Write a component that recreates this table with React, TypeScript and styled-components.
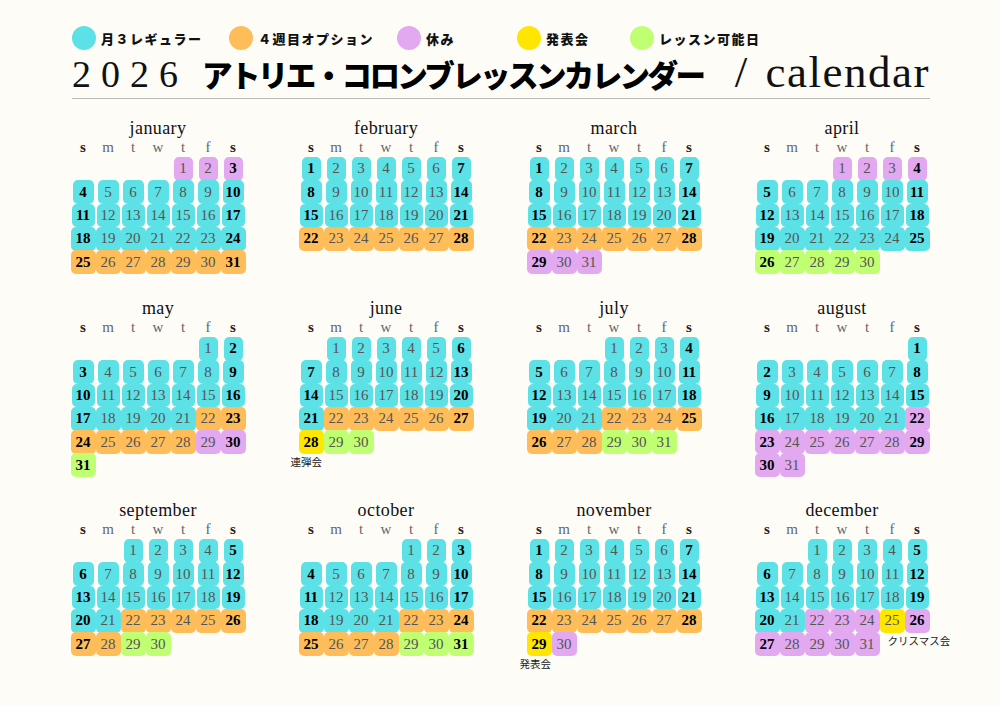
import React from 'react';
import styled, { createGlobalStyle } from 'styled-components';

const GlobalStyle = createGlobalStyle`
  body {
    margin: 0;
    background: #fdfcf7;
    font-family: "Liberation Serif", serif;
  }
`;

const COLORS: Record<string, string> = {
  C: '#5ce1e6',
  O: '#ffbd59',
  P: '#e2a8f0',
  Y: '#ffe600',
  G: '#c1ff72',
};

type Range = [number, number, string];
type Note = { day: number; text: string; dx: number };
type MonthData = { name: string; start: number; days: number; ranges: Range[]; note?: Note };

const MONTHS: MonthData[] = [
  { name: 'january', start: 4, days: 31, ranges: [[1, 3, 'P'], [4, 24, 'C'], [25, 31, 'O']] },
  { name: 'february', start: 0, days: 28, ranges: [[1, 21, 'C'], [22, 28, 'O']] },
  { name: 'march', start: 0, days: 31, ranges: [[1, 21, 'C'], [22, 28, 'O'], [29, 31, 'P']] },
  { name: 'april', start: 3, days: 30, ranges: [[1, 4, 'P'], [5, 25, 'C'], [26, 30, 'G']] },
  { name: 'may', start: 5, days: 31, ranges: [[1, 21, 'C'], [22, 28, 'O'], [29, 30, 'P'], [31, 31, 'G']] },
  {
    name: 'june', start: 1, days: 30, ranges: [[1, 21, 'C'], [22, 27, 'O'], [28, 28, 'Y'], [29, 30, 'G']],
    note: { day: 28, text: '連弾会', dx: -8 },
  },
  { name: 'july', start: 3, days: 31, ranges: [[1, 21, 'C'], [22, 28, 'O'], [29, 31, 'G']] },
  { name: 'august', start: 6, days: 31, ranges: [[1, 21, 'C'], [22, 31, 'P']] },
  { name: 'september', start: 2, days: 30, ranges: [[1, 21, 'C'], [22, 28, 'O'], [29, 30, 'G']] },
  { name: 'october', start: 4, days: 31, ranges: [[1, 21, 'C'], [22, 28, 'O'], [29, 31, 'G']] },
  {
    name: 'november', start: 0, days: 30, ranges: [[1, 21, 'C'], [22, 28, 'O'], [29, 29, 'Y'], [30, 30, 'P']],
    note: { day: 29, text: '発表会', dx: -7 },
  },
  {
    name: 'december', start: 2, days: 31, ranges: [[1, 21, 'C'], [22, 24, 'P'], [25, 25, 'Y'], [26, 31, 'P']],
    note: { day: 25, text: 'クリスマス会', dx: 8 },
  },
];

const LEGEND = [
  { color: 'C', label: '月３レギュラー' },
  { color: 'O', label: '４週目オプション' },
  { color: 'P', label: '休み' },
  { color: 'Y', label: '発表会' },
  { color: 'G', label: 'レッスン可能日' },
];

const WEEK = ['s', 'm', 't', 'w', 't', 'f', 's'];

const Page = styled.div`
  width: 1000px;
  height: 706px;
  box-sizing: border-box;
  padding: 26px 70px 0 72px;
  overflow: hidden;
`;

const Legend = styled.div`
  display: grid;
  grid-template-columns: 157px 168px 120px 113px auto;
  height: 24px;
  align-items: center;
`;

const LegendItem = styled.div`
  display: flex;
  align-items: center;
  gap: 5px;
`;

const Dot = styled.span<{ $color: string }>`
  width: 24px;
  height: 24px;
  border-radius: 50%;
  background: ${(p) => p.$color};
  flex: none;
`;

const LegendLabel = styled.span`
  font-family: "Noto Sans CJK JP", sans-serif;
  font-weight: 900;
  font-size: 13px;
  letter-spacing: 1.5px;
  color: #111;
`;

const TitleRow = styled.div`
  display: flex;
  align-items: baseline;
  padding-bottom: 2px;
  border-bottom: 1px solid #b9b9b5;
`;

const Year = styled.span`
  font-family: "Liberation Serif", serif;
  font-size: 38px;
  line-height: 44px;
  letter-spacing: 10px;
  color: #111;
`;

const Title = styled.span`
  font-family: "Noto Sans CJK JP", sans-serif;
  font-weight: 900;
  font-size: 30.5px;
  line-height: 44px;
  letter-spacing: -2.6px;
  margin-left: 14px;
  color: #000;
`;

const Sub = styled.span`
  margin-left: auto;
  font-family: "Liberation Serif", serif;
  font-size: 45px;
  line-height: 44px;
  letter-spacing: 1.5px;
  color: #111;
  word-spacing: 4px;
`;

const MonthGrid = styled.div`
  display: grid;
  grid-template-columns: repeat(4, 175px);
  grid-template-rows: 180px 202px auto;
  column-gap: 53px;
  margin: 20px 0 0 -1.5px;
`;

const Month = styled.div`
  display: flex;
  flex-direction: column;
`;

const MonthName = styled.div`
  text-align: center;
  font-size: 18px;
  line-height: 19px;
  color: #111;
  letter-spacing: 0.4px;
`;

const Week = styled.div`
  display: grid;
  grid-template-columns: repeat(7, 25px);
  font-size: 15px;
  line-height: 19px;
  text-align: center;
`;

const WeekDay = styled.span<{ $end: boolean }>`
  color: ${(p) => (p.$end ? '#222' : '#666')};
  font-weight: ${(p) => (p.$end ? 700 : 400)};
`;

const Days = styled.div`
  display: grid;
  grid-template-columns: repeat(7, 25px);
  grid-auto-rows: 23.3px;
`;

const Day = styled.div<{ $bg: string; $row: number; $end: boolean }>`
  position: relative;
  justify-self: center;
  width: ${(p) => Math.min(25, 19 + p.$row * 2)}px;
  height: 23.8px;
  border-radius: 5px;
  background: ${(p) => p.$bg};
  display: flex;
  align-items: center;
  justify-content: center;
  font-size: 15px;
  font-weight: ${(p) => (p.$end ? 700 : 400)};
  color: ${(p) => (p.$end ? '#000' : '#555')};
`;

const DayNote = styled.span`
  position: absolute;
  top: 100%;
  margin-top: 1px;
  white-space: nowrap;
  font-family: "Noto Sans CJK JP", sans-serif;
  font-weight: 400;
  font-size: 10.5px;
  line-height: 14px;
  color: #222;
`;

function colorOf(m: MonthData, d: number) {
  const r = m.ranges.find(([a, b]) => d >= a && d <= b);
  return r ? COLORS[r[2]] : 'transparent';
}

const MonthView: React.FC<{ m: MonthData }> = ({ m }) => (
  <Month>
    <MonthName>{m.name}</MonthName>
    <Week>
      {WEEK.map((w, i) => (
        <WeekDay key={i} $end={i === 0 || i === 6}>{w}</WeekDay>
      ))}
    </Week>
    <Days>
      {Array.from({ length: m.days }, (_, i) => {
        const d = i + 1;
        const pos = m.start + i;
        const col = pos % 7;
        const row = Math.floor(pos / 7);
        const note = m.note && m.note.day === d ? m.note : null;
        return (
          <Day
            key={d}
            $bg={colorOf(m, d)}
            $row={row}
            $end={col === 0 || col === 6}
            style={d === 1 ? { gridColumnStart: col + 1 } : undefined}
          >
            {d}
            {note && <DayNote style={{ left: note.dx }}>{note.text}</DayNote>}
          </Day>
        );
      })}
    </Days>
  </Month>
);

const App: React.FC = () => (
  <Page>
    <GlobalStyle />
    <Legend>
      {LEGEND.map((l) => (
        <LegendItem key={l.label}>
          <Dot $color={COLORS[l.color]} />
          <LegendLabel>{l.label}</LegendLabel>
        </LegendItem>
      ))}
    </Legend>
    <TitleRow>
      <Year>2026</Year>
      <Title>アトリエ・コロンブレッスンカレンダー</Title>
      <Sub>/ calendar</Sub>
    </TitleRow>
    <MonthGrid>
      {MONTHS.map((m) => (
        <MonthView key={m.name} m={m} />
      ))}
    </MonthGrid>
  </Page>
);

export default App;
